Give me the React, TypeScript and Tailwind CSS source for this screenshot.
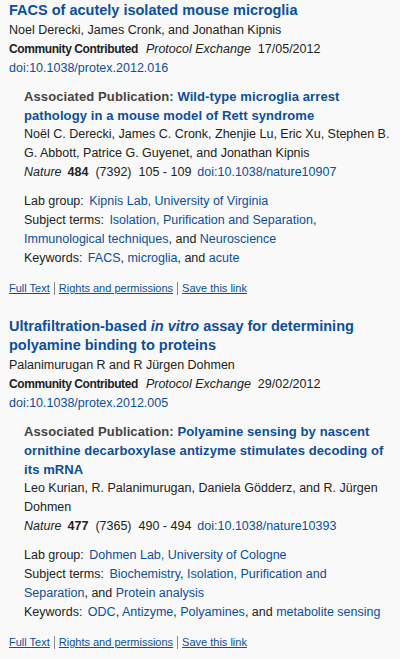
import React from 'react';

type Pub = {
  title: React.ReactNode;
  authors: string;
  date: string;
  doi: string;
  assocTitle: string;
  assocAuthors: string;
  volume: string;
  issue: string;
  pages: string;
  assocDoi: string;
  lab: string;
  subjects: string[];
  keywords: string[];
};

const pubs: Pub[] = [
  {
    title: 'FACS of acutely isolated mouse microglia',
    authors: 'Noel Derecki, James Cronk, and Jonathan Kipnis',
    date: '17/05/2012',
    doi: 'doi:10.1038/protex.2012.016',
    assocTitle: 'Wild-type microglia arrest pathology in a mouse model of Rett syndrome',
    assocAuthors:
      'Noël C. Derecki, James C. Cronk, Zhenjie Lu, Eric Xu, Stephen B. G. Abbott, Patrice G. Guyenet, and Jonathan Kipnis',
    volume: '484',
    issue: '(7392)',
    pages: '105 - 109',
    assocDoi: 'doi:10.1038/nature10907',
    lab: 'Kipnis Lab, University of Virginia',
    subjects: ['Isolation, Purification and Separation', 'Immunological techniques', 'Neuroscience'],
    keywords: ['FACS', 'microglia', 'acute'],
  },
  {
    title: (
      <>
        Ultrafiltration-based <i>in vitro</i> assay for determining polyamine binding to proteins
      </>
    ),
    authors: 'Palanimurugan R and R Jürgen Dohmen',
    date: '29/02/2012',
    doi: 'doi:10.1038/protex.2012.005',
    assocTitle: 'Polyamine sensing by nascent ornithine decarboxylase antizyme stimulates decoding of its mRNA',
    assocAuthors: 'Leo Kurian, R. Palanimurugan, Daniela Gödderz, and R. Jürgen Dohmen',
    volume: '477',
    issue: '(7365)',
    pages: '490 - 494',
    assocDoi: 'doi:10.1038/nature10393',
    lab: 'Dohmen Lab, University of Cologne',
    subjects: ['Biochemistry', 'Isolation, Purification and Separation', 'Protein analysis'],
    keywords: ['ODC', 'Antizyme', 'Polyamines', 'metabolite sensing'],
  },
];

function LinkList({ items }: { items: string[] }) {
  return (
    <>
      {items.map((t, i) => (
        <React.Fragment key={t}>
          {i > 0 && (i === items.length - 1 ? ', and ' : ', ')}
          <a className="text-[#0b4f9e]">{t}</a>
        </React.Fragment>
      ))}
    </>
  );
}

function Entry({ p }: { p: Pub }) {
  return (
    <div className="mb-[21px]">
      <h3 className="mb-[1px] text-[14.5px] font-bold leading-[19px] text-[#0b4f9e]">{p.title}</h3>
      <div className="leading-[19px]">
        <div>{p.authors}</div>
        <div>
          <b className="text-[12px] tracking-[-0.4px]">Community Contributed</b>
          <i className="ml-[8px]">Protocol Exchange</i>
          <span className="ml-[7px]">{p.date}</span>
        </div>
        <a className="text-[#0b4f9e]">{p.doi}</a>
      </div>

      <div className="ml-[15px] mt-[9px] leading-[19px]">
        <div className="text-[13px] font-bold tracking-[0.1px]">
          <span className="text-[#444]">Associated Publication: </span>
          <a className="text-[#0b4f9e]">{p.assocTitle}</a>
        </div>
        <div>{p.assocAuthors}</div>
        <div>
          <i>Nature</i>
          <b className="ml-[6px]">{p.volume}</b>
          <span className="ml-[7px]">{p.issue}</span>
          <span className="ml-[7px]">{p.pages}</span>
          <a className="ml-[6px] text-[#0b4f9e]">{p.assocDoi}</a>
        </div>

        <div className="mt-[10px]">
          Lab group: <a className="ml-[2px] text-[#0b4f9e]">{p.lab}</a>
        </div>
        <div>
          Subject terms: <span className="ml-[2px]"><LinkList items={p.subjects} /></span>
        </div>
        <div>
          Keywords: <span className="ml-[2px]"><LinkList items={p.keywords} /></span>
        </div>
      </div>

      <div className="mt-[13px] flex items-center text-[11px] leading-[15px]">
        <a className="text-[#0b4f9e] underline">Full Text</a>
        <span className="mx-[4px] h-[13px] w-px bg-[#888]" />
        <a className="text-[#0b4f9e] underline">Rights and permissions</a>
        <span className="mx-[4px] h-[13px] w-px bg-[#888]" />
        <a className="text-[#0b4f9e] underline">Save this link</a>
      </div>
    </div>
  );
}

export default function App() {
  return (
    <div className="min-h-[659px] bg-[#f9f9f9] pl-[9px] pr-[6px] pt-[1px] text-[12.5px] text-[#222] font-['Liberation_Sans',Arial,sans-serif]">
      {pubs.map((p, i) => (
        <Entry key={i} p={p} />
      ))}
    </div>
  );
}
